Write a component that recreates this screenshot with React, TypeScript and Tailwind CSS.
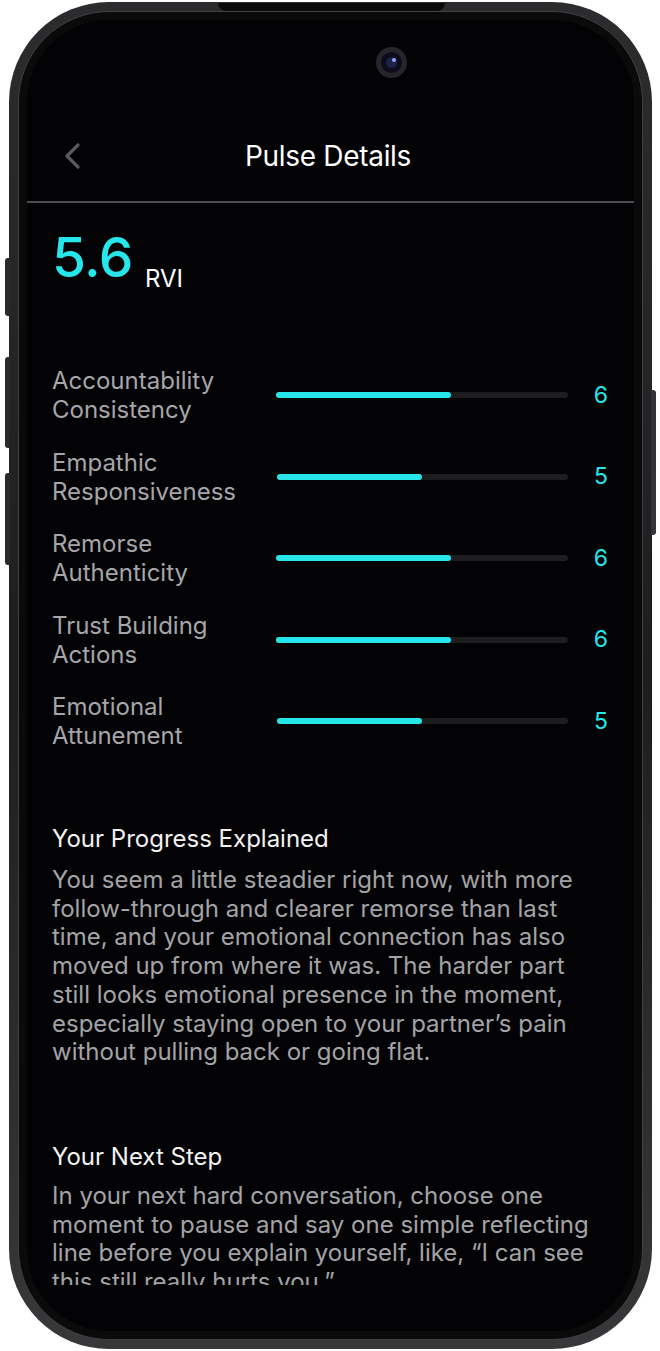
import React from "react";

const CYAN = "text-[#27e6ea]";

const metrics = [
  { l1: "Accountability", l2: "Consistency", v: 6 },
  { l1: "Empathic", l2: "Responsiveness", v: 5 },
  { l1: "Remorse", l2: "Authenticity", v: 6 },
  { l1: "Trust Building", l2: "Actions", v: 6 },
  { l1: "Emotional", l2: "Attunement", v: 5 },
];

export default function App() {
  return (
    <div
      className="w-[660px] h-[1351px] bg-white overflow-hidden"
      style={{ fontFamily: "Inter, 'Noto Sans', sans-serif" }}
    >
      <div className="relative ml-[9px] mt-[2px] w-[643px] h-[1347px]">
        {/* side buttons */}
        <div className="absolute left-[-4px] top-[256px] w-[5px] h-[58px] rounded-l-[3px] bg-[#2a2a2c]" />
        <div className="absolute left-[-4px] top-[355px] w-[5px] h-[91px] rounded-l-[3px] bg-[#2a2a2c]" />
        <div className="absolute left-[-4px] top-[471px] w-[5px] h-[92px] rounded-l-[3px] bg-[#2a2a2c]" />
        <div className="absolute right-[-4px] top-[388px] w-[5px] h-[145px] rounded-r-[3px] bg-[#343436]" />

        <div className="w-full h-full rounded-[100px] bg-gradient-to-b from-[#2c2c2e] via-[#1e1e20] to-[#38383a] p-[9px]">
          <div className="w-full h-full rounded-[91px] bg-[#0a0a0b] border border-[#414143] p-[8px]">
            <div className="relative w-full h-full rounded-[82px] bg-[#030305] overflow-hidden flex flex-col">
              {/* camera */}
              <div className="absolute left-[349px] top-[27px] w-[31px] h-[31px] rounded-full bg-[#26262a] flex items-center justify-center">
                <div className="w-[21px] h-[21px] rounded-full bg-[#0c0c1c] flex items-center justify-center">
                  <div className="w-[11px] h-[11px] rounded-full bg-[#1c2248] flex items-start justify-end p-[1px]">
                    <div className="w-[4px] h-[4px] rounded-full bg-[#8fa6ff]" />
                  </div>
                </div>
              </div>

              <div className="h-[100px] shrink-0" />

              {/* header */}
              <div className="relative h-[81px] shrink-0 pb-[9px] flex items-center justify-center">
                <svg
                  className="absolute left-[36px] top-[22px]"
                  width="20"
                  height="28"
                  viewBox="0 0 20 28"
                  fill="none"
                >
                  <polyline
                    points="15,3 4,14 15,25"
                    stroke="#5a5a5e"
                    strokeWidth="3.2"
                    strokeLinecap="round"
                    strokeLinejoin="round"
                  />
                </svg>
                <span className="mr-[5px] text-[28px] leading-none text-white tracking-[-0.3px]">
                  Pulse Details
                </span>
              </div>
              <div className="h-[2px] shrink-0 bg-[#4e4e52]" />

              {/* content */}
              <div className="h-[1082px] shrink-0 overflow-hidden pl-[25px] pr-[26px] pt-[27px]">
                <div className="flex items-baseline">
                  <span className={`text-[55px] leading-none font-medium ${CYAN} tracking-[-0.5px]`}>
                    5.6
                  </span>
                  <span className="relative top-[10px] ml-[12px] text-[24px] leading-none text-white">
                    RVI
                  </span>
                </div>

                <div className="mt-[81px] flex flex-col gap-[23.5px]">
                  {metrics.map((m) => (
                    <div key={m.l1} className="flex items-center h-[58px]">
                      <div className="w-[225px] text-[24px] leading-[29px] text-[#a6a6aa]">
                        <div>{m.l1}</div>
                        <div>{m.l2}</div>
                      </div>
                      <div className="w-[292px] h-[6px] rounded-full bg-[#1d1d20]">
                        <div
                          className="h-full rounded-full bg-[#27e6ea]"
                          style={{ width: `${m.v * 10}%` }}
                        />
                      </div>
                      <div className={`ml-[26px] text-[23px] leading-none ${CYAN}`}>{m.v}</div>
                    </div>
                  ))}
                </div>

                <div className="mt-[74px] text-[24px] leading-[29px] text-[#f2f2f2]">
                  Your Progress Explained
                </div>
                <p className="mt-[13px] text-[24px] leading-[28.7px] text-[#a3a3a7]">
                  You seem a little steadier right now, with more follow-through and clearer
                  remorse than last time, and your emotional connection has also moved up from
                  where it was. The harder part still looks emotional presence in the moment,
                  especially staying open to your partner’s pain without pulling back or going
                  flat.
                </p>

                <div className="mt-[75px] text-[24px] leading-[29px] text-[#f2f2f2]">
                  Your Next Step
                </div>
                <p className="mt-[11px] text-[24px] leading-[28.7px] text-[#a3a3a7]">
                  In your next hard conversation, choose one moment to pause and say one simple
                  reflecting line before you explain yourself, like, “I can see this still
                  really hurts you.”
                </p>
              </div>
            </div>
          </div>
        </div>

        {/* top notch dip */}
        <div className="absolute left-[209px] top-[1px] w-[227px] h-[8px] rounded-b-[8px] bg-[#0a0a0b]" />
      </div>
    </div>
  );
}
